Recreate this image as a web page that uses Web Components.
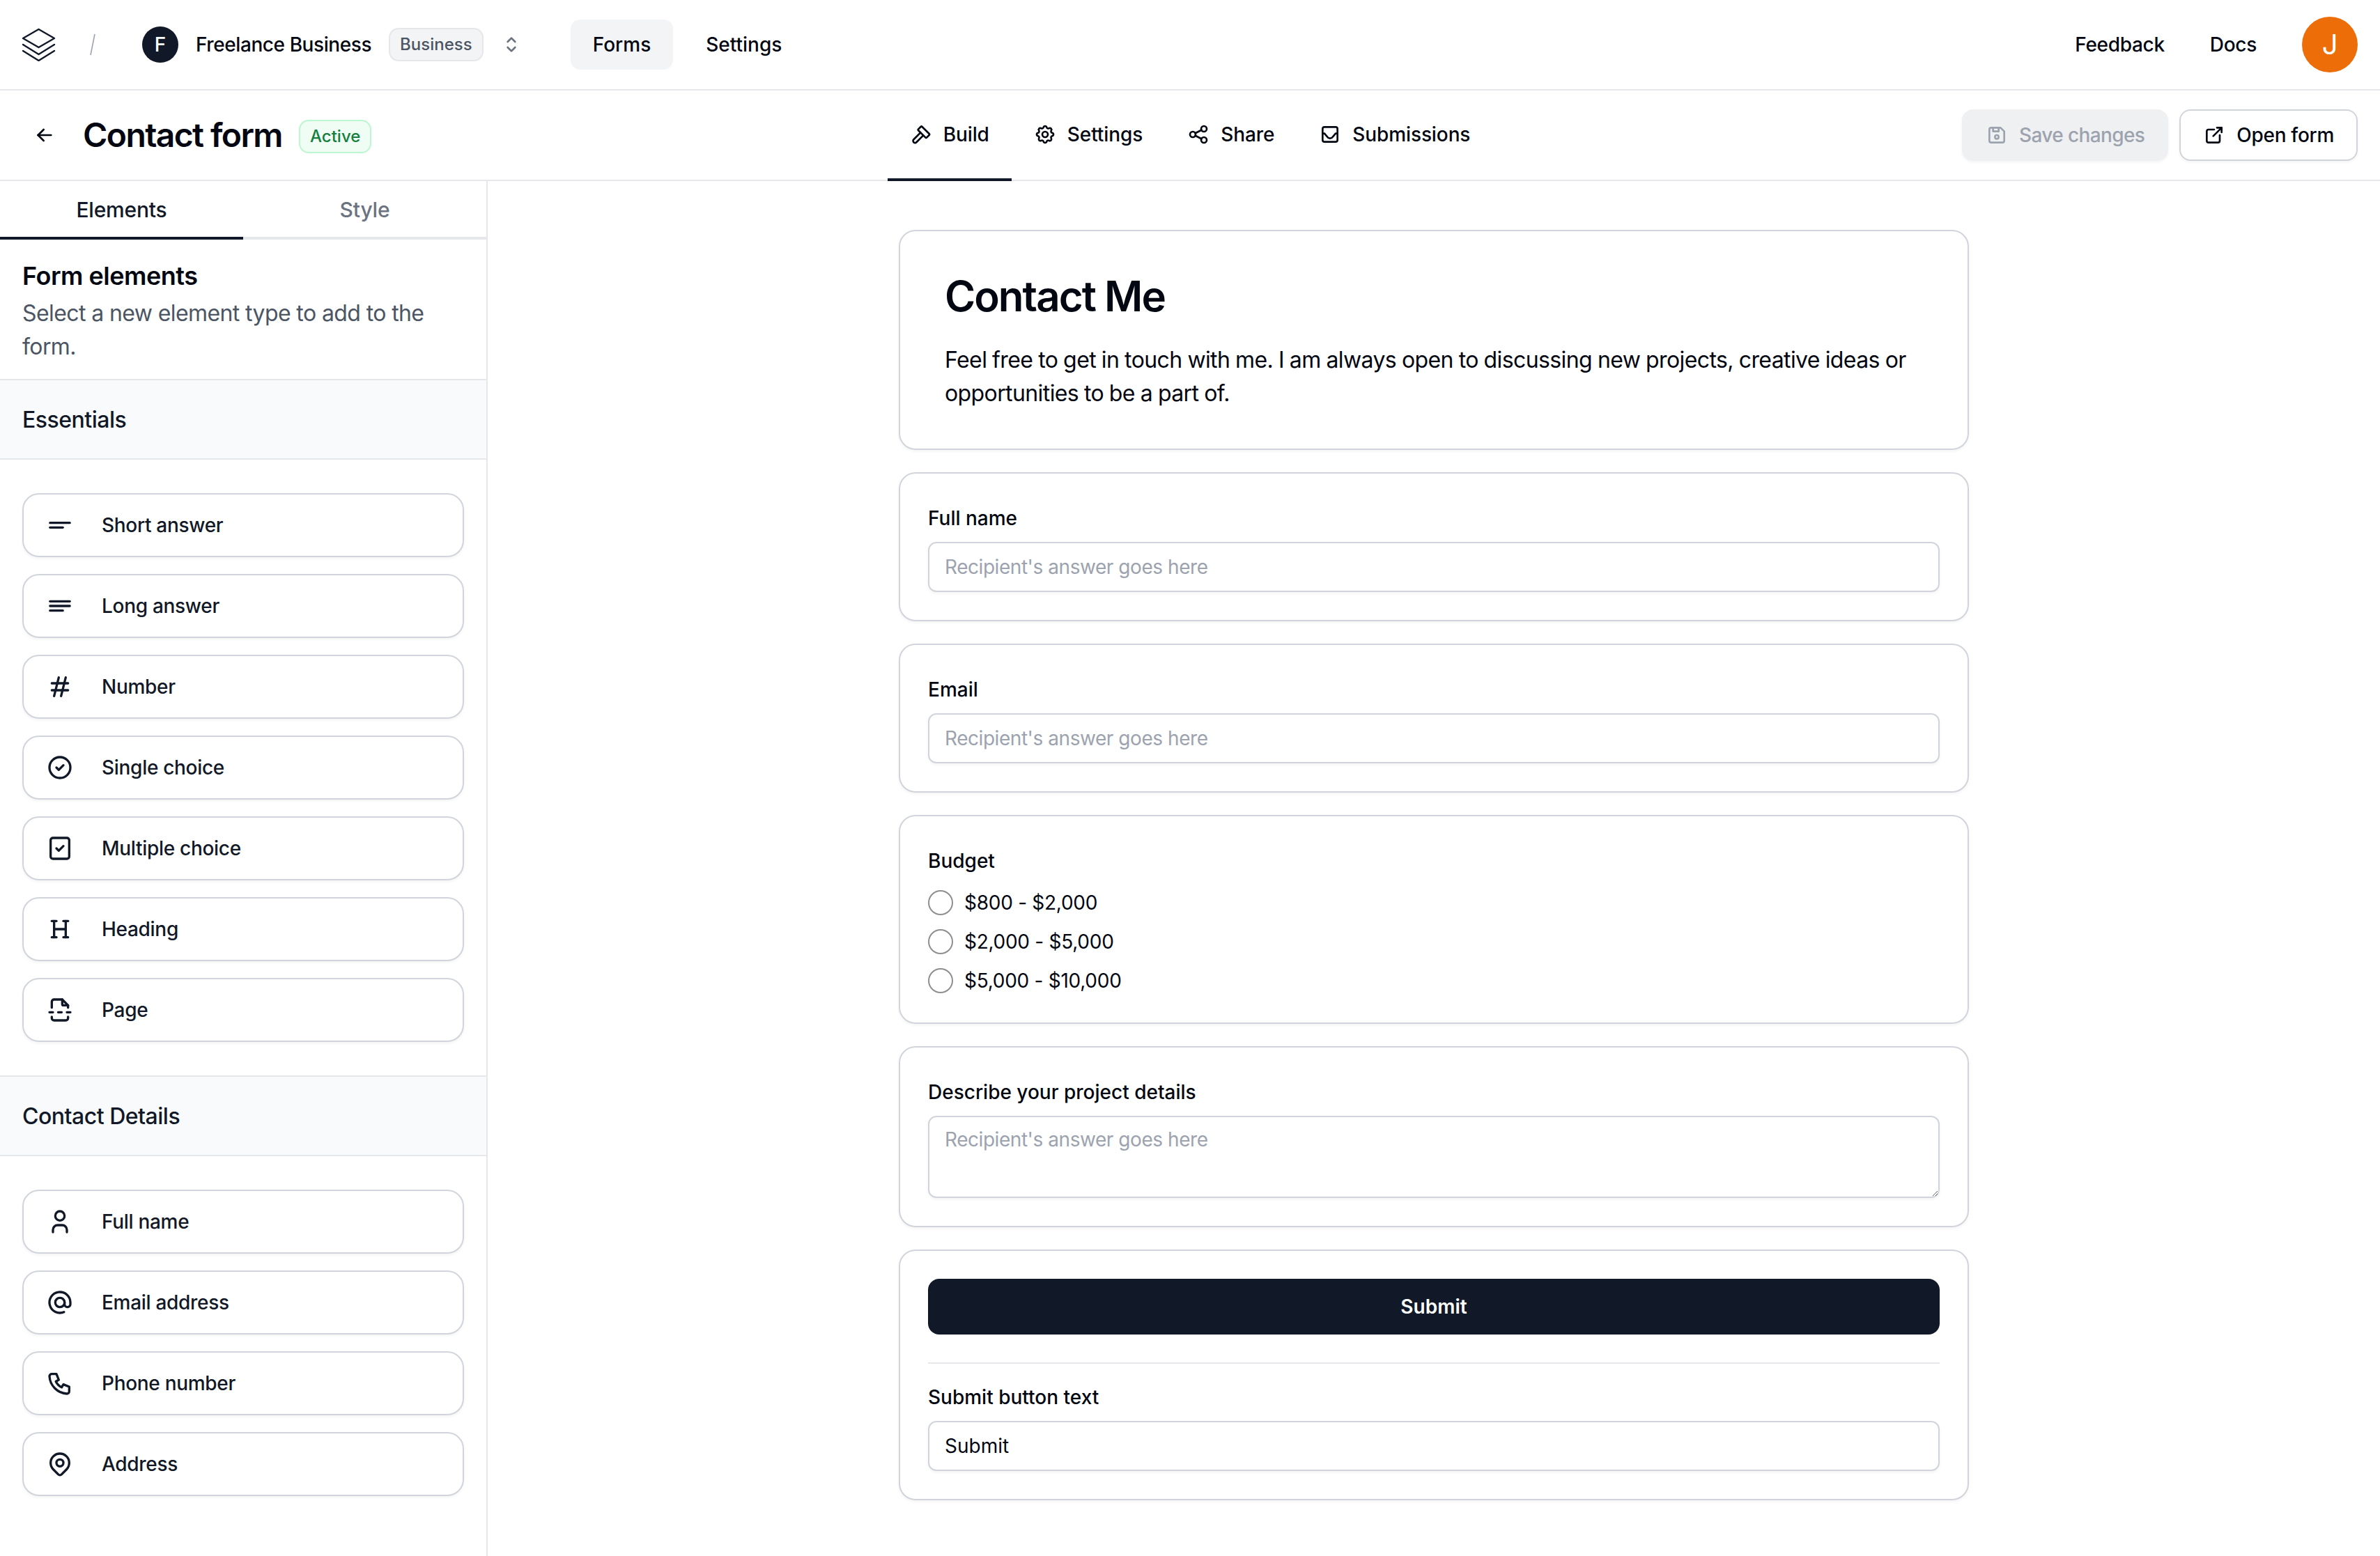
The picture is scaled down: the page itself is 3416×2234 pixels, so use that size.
<!DOCTYPE html>
<html lang="en">
<head>
<meta charset="utf-8">
<title>Contact form</title>
<style>
  html, body { margin: 0; height: 100%; background: #fff; }
  body { font-family: Inter, "Noto Sans", sans-serif; color: #111827; overflow: hidden; }
</style>
</head>
<body>
<form-app></form-app>

<script>
const ICONS = {
  left: '<path d="M5 12h14"/><path d="M5 12l6 6"/><path d="M5 12l6-6"/>',
  selector: '<path d="M8 9l4-4l4 4"/><path d="M16 15l-4 4l-4-4"/>',
  hammer: '<path d="M11.414 10l-7.383 7.418a2.091 2.091 0 0 0 0 2.967a2.11 2.11 0 0 0 2.976 0l7.407-7.385"/><path d="M18.121 15.293l2.586-2.586a1 1 0 0 0 0-1.414l-7.586-7.586a1 1 0 0 0-1.414 0l-2.586 2.586a1 1 0 0 0 0 1.414l7.586 7.586a1 1 0 0 0 1.414 0z"/>',
  settings: '<path d="M10.325 4.317c.426-1.756 2.924-1.756 3.35 0a1.724 1.724 0 0 0 2.573 1.066c1.543-.94 3.31.826 2.37 2.37a1.724 1.724 0 0 0 1.065 2.572c1.756.426 1.756 2.924 0 3.35a1.724 1.724 0 0 0-1.066 2.573c.94 1.543-.826 3.31-2.37 2.37a1.724 1.724 0 0 0-2.572 1.065c-.426 1.756-2.924 1.756-3.35 0a1.724 1.724 0 0 0-2.573-1.066c-1.543.94-3.31-.826-2.37-2.37a1.724 1.724 0 0 0-1.065-2.572c-1.756-.426-1.756-2.924 0-3.35a1.724 1.724 0 0 0 1.066-2.573c-.94-1.543.826-3.31 2.37-2.37c1 .608 2.296.07 2.572-1.065z"/><circle cx="12" cy="12" r="3"/>',
  share: '<circle cx="6" cy="12" r="3"/><circle cx="18" cy="6" r="3"/><circle cx="18" cy="18" r="3"/><path d="M8.7 10.7l6.6-3.4"/><path d="M8.7 13.3l6.6 3.4"/>',
  inbox: '<rect x="4" y="4" width="16" height="16" rx="2"/><path d="M4 11l2 0l3 3.5a3.5 3.5 0 0 0 6 0l3-3.5l2 0"/>',
  save: '<path d="M6 4h10l4 4v10a2 2 0 0 1-2 2h-12a2 2 0 0 1-2-2v-12a2 2 0 0 1 2-2"/><circle cx="12" cy="14" r="2"/><path d="M14 4v4h-6v-4"/>',
  external: '<path d="M12 6h-6a2 2 0 0 0-2 2v10a2 2 0 0 0 2 2h10a2 2 0 0 0 2-2v-6"/><path d="M11 13l9-9"/><path d="M15 4h5v5"/>',
  short: '<path d="M3.5 10h17"/><path d="M3.5 14h11"/>',
  long: '<path d="M3.5 8h17"/><path d="M3.5 12h17"/><path d="M3.5 16h11"/>',
  hash: '<path d="M5 9h14"/><path d="M5 15h14"/><path d="M11 4l-4 16"/><path d="M17 4l-4 16"/>',
  radio: '<circle cx="12" cy="12" r="9"/><path d="M9 12l2 2l4-4"/>',
  check: '<rect x="4" y="3" width="16" height="18" rx="2"/><path d="M9 12l2 2l4-4"/>',
  heading: '<path d="M7 12h10"/><path d="M7 5v14"/><path d="M17 5v14"/><path d="M15 19h4"/><path d="M15 5h4"/><path d="M5 19h4"/><path d="M5 5h4"/>',
  page: '<path d="M14 3v4a1 1 0 0 0 1 1h4"/><path d="M19 18v1a2 2 0 0 1-2 2h-10a2 2 0 0 1-2-2v-1"/><path d="M3 14h3m4.5 0h3m4.5 0h3"/><path d="M5 10v-5a2 2 0 0 1 2-2h7l5 5v2"/>',
  user: '<path d="M8 7a4 4 0 1 0 8 0a4 4 0 0 0-8 0"/><path d="M6 21v-2a4 4 0 0 1 4-4h4a4 4 0 0 1 4 4v2"/>',
  at: '<circle cx="12" cy="12" r="4"/><path d="M16 12v1.5a2.5 2.5 0 0 0 5 0v-1.5a9 9 0 1 0-5.5 8.28"/>',
  phone: '<path d="M5 4h4l2 5l-2.5 1.5a11 11 0 0 0 5 5l1.5-2.5l5 2v4a2 2 0 0 1-2 2a16 16 0 0 1-15-15a2 2 0 0 1 2-2"/>',
  pin: '<path d="M9 11a3 3 0 1 0 6 0a3 3 0 0 0-6 0"/><path d="M17.657 16.657l-4.243 4.243a2 2 0 0 1-2.827 0l-4.244-4.243a8 8 0 1 1 11.314 0z"/>'
};

class AppIcon extends HTMLElement {
  connectedCallback() {
    const size = this.getAttribute('size') || 32;
    this.attachShadow({ mode: 'open' }).innerHTML = `
      <style>
        :host { display: inline-flex; flex: none; width: ${size}px; height: ${size}px; }
        svg { width: 100%; height: 100%; fill: none; stroke: currentColor; stroke-width: 2; stroke-linecap: round; stroke-linejoin: round; }
      </style>
      <svg viewBox="0 0 24 24">${ICONS[this.getAttribute('name')]}</svg>`;
  }
}

class TopBar extends HTMLElement {
  constructor() {
    super();
    this.attachShadow({ mode: 'open' }).innerHTML = `
      <style>
        :host { display: flex; align-items: center; height: 128px; padding: 0 32px; border-bottom: 2px solid #e5e7eb; font-size: 28px; font-weight: 500; line-height: 40px; color: #030712; }
        .logo { width: 48px; height: 48px; fill: none; stroke: #111827; stroke-width: 2.4; stroke-linejoin: round; stroke-linecap: round; }
        .slash { width: 10px; height: 32px; margin: 0 66px 0 48px; stroke: #9ca3af; stroke-width: 1.6; }
        .org { width: 52px; height: 52px; border-radius: 50%; background: #111827; color: #fff; display: flex; align-items: center; justify-content: center; margin-right: 25px; }
        .name { letter-spacing: -0.42px; }
        .plan { margin-left: 25px; height: 44px; padding: 0 14px; display: flex; align-items: center; background: #f3f4f6; border: 2px solid #e5e7eb; border-radius: 14px; font-size: 24px; color: #4b5563; }
        app-icon { color: #6b7280; margin: 0 69px 0 24px; }
        a { padding: 0 32px; height: 72px; display: flex; align-items: center; border-radius: 14px; }
        a.on { background: #f3f4f6; margin-right: 15px; }
        .side { margin-left: auto; display: flex; align-items: center; letter-spacing: -0.3px; }
        .side span { margin-right: 65px; }
        .me { width: 80px; height: 80px; border-radius: 50%; background: #ed6e08; color: #fff; display: flex; align-items: center; justify-content: center; font-size: 40px; font-weight: 400; }
      </style>
      <svg class="logo" viewBox="0 0 48 48"><path d="M23.5 2L46 15L23.5 28L1 15z"/><path d="M1 24L23.5 38L46 24"/><path d="M1 33L23.5 47L46 33"/></svg>
      <svg class="slash" viewBox="0 0 10 32"><path d="M8 1L2 31"/></svg>
      <div class="org">F</div>
      <div class="name">Freelance Business</div>
      <div class="plan">Business</div>
      <app-icon name="selector" size="32"></app-icon>
      <a class="on">Forms</a><a>Settings</a>
      <div class="side"><span>Feedback</span><span>Docs</span><div class="me">J</div></div>`;
  }
}

class SubBar extends HTMLElement {
  constructor() {
    super();
    this.attachShadow({ mode: 'open' }).innerHTML = `
      <style>
        :host { display: flex; align-items: center; height: 128px; padding: 0 32px; border-bottom: 2px solid #e5e7eb; font-size: 28px; font-weight: 500; line-height: 40px; color: #030712; }
        .left, .right { flex: 1 1 0; display: flex; align-items: center; }
        .right { justify-content: flex-end; gap: 16px; letter-spacing: -0.3px; }
        .left app-icon { margin: 0 39px 0 16px; }
        h1 { margin: 0; font-size: 48px; line-height: 64px; font-weight: 600; letter-spacing: -1.6px; }
        .active { margin: 3px 0 0 24px; height: 44px; padding: 0 14px; display: flex; align-items: center; background: #f0fdf4; border: 2px solid #bbf7d0; border-radius: 14px; font-size: 24px; color: #15803d; }
        nav { display: flex; align-self: stretch; letter-spacing: -0.1px; }
        nav a { display: flex; align-items: center; gap: 16px; padding: 0 32px; height: 130px; box-sizing: border-box; border-bottom: 4px solid transparent; }
        nav a.on { border-bottom-color: #111827; }
        button { font: inherit; letter-spacing: inherit; display: flex; align-items: center; gap: 16px; height: 74px; padding: 0 32px; border-radius: 16px; box-shadow: 0 2px 4px rgba(0,0,0,.05); }
        .save { background: #eff0f2; border: 2px solid #eff0f2; color: #9ca3af; letter-spacing: -0.6px; }
        .open { background: #fff; border: 2px solid #d1d5db; color: #030712; }
      </style>
      <div class="left">
        <app-icon name="left" size="32"></app-icon>
        <h1>Contact form</h1>
        <div class="active">Active</div>
      </div>
      <nav>
        <a class="on"><app-icon name="hammer"></app-icon>Build</a>
        <a><app-icon name="settings"></app-icon>Settings</a>
        <a><app-icon name="share"></app-icon>Share</a>
        <a><app-icon name="inbox"></app-icon>Submissions</a>
      </nav>
      <div class="right">
        <button class="save"><app-icon name="save"></app-icon>Save changes</button>
        <button class="open"><app-icon name="external"></app-icon>Open form</button>
      </div>`;
  }
}

class PaletteItem extends HTMLElement {
  constructor() {
    super();
    this.attachShadow({ mode: 'open' }).innerHTML = `
      <style>
        :host { display: flex; align-items: center; gap: 40px; height: 92px; box-sizing: border-box; padding: 0 32px; border: 2px solid #d1d5db; border-radius: 24px; background: #fff; box-shadow: 0 2px 4px rgba(0,0,0,.05); font-size: 28px; font-weight: 500; letter-spacing: -0.3px; color: #111827; }
      </style>
      <app-icon name="${this.getAttribute('icon')}" size="40"></app-icon><slot></slot>`;
  }
}

class PaletteGroup extends HTMLElement {
  constructor() {
    super();
    this.attachShadow({ mode: 'open' }).innerHTML = `
      <style>
        :host { display: block; }
        h3 { margin: 0; height: 112px; box-sizing: content-box; display: flex; align-items: center; padding: 0 32px; background: #f9fafb; border-top: 2px solid #e5e7eb; border-bottom: 2px solid #e5e7eb; font-size: 32px; font-weight: 500; letter-spacing: -0.5px; color: #111827; }
        .list { display: flex; flex-direction: column; gap: 24px; padding: 48px 32px; }
      </style>
      <h3>${this.getAttribute('title')}</h3>
      <div class="list"><slot></slot></div>`;
  }
}

class FormSidebar extends HTMLElement {
  constructor() {
    super();
    this.attachShadow({ mode: 'open' }).innerHTML = `
      <style>
        :host { display: block; width: 698px; border-right: 2px solid #e5e7eb; overflow: hidden; }
        .tabs { display: flex; height: 84px; font-size: 30px; font-weight: 500; letter-spacing: -0.2px; }
        .tabs div { flex: 1; display: flex; align-items: center; justify-content: center; box-sizing: border-box; padding-top: 2px; border-bottom: 4px solid #e5e7eb; color: #6b7280; }
        .tabs div.on { border-bottom-color: #111827; color: #111827; }
        .intro { padding: 24px 32px 22px; }
        h2 { margin: 0; font-size: 36px; line-height: 56px; font-weight: 600; letter-spacing: -0.5px; color: #030712; }
        p { margin: 2px 0 0; font-size: 32px; line-height: 48px; letter-spacing: -0.6px; color: #4b5563; }
      </style>
      <div class="tabs"><div class="on">Elements</div><div>Style</div></div>
      <div class="intro">
        <h2>Form elements</h2>
        <p>Select a new element type to add to the form.</p>
      </div>
      <slot></slot>`;
  }
}

class FormCard extends HTMLElement {
  constructor() {
    super();
    this.attachShadow({ mode: 'open' }).innerHTML = `
      <style>
        :host { display: block; box-sizing: border-box; padding: 40px; border: 2px solid #d1d5db; border-radius: 24px; background: #fff; box-shadow: 0 2px 4px rgba(0,0,0,.05); }
        :host([intro]) { padding: 57px 64px 55px; }
      </style>
      <slot></slot>`;
  }
}

class FormField extends HTMLElement {
  constructor() {
    super();
    this.attachShadow({ mode: 'open' }).innerHTML = `
      <style>
        :host { display: block; font-size: 28px; line-height: 40px; color: #030712; }
        label { display: block; padding-top: 4px; font-weight: 500; margin-bottom: 14px; }
        .box { box-sizing: border-box; height: 72px; padding: 14px 22px; border: 2px solid #d1d5db; border-radius: 12px; background: #fff; box-shadow: 0 2px 4px rgba(0,0,0,.05); color: #9ca3af; letter-spacing: -0.45px; }
        .box.area { height: 118px; padding-top: 12px; resize: vertical; overflow: auto; }
        :host([value]) .box { color: #030712; letter-spacing: 0; }
      </style>
      <label>${this.getAttribute('label')}</label>
      <div class="box ${this.hasAttribute('area') ? 'area' : ''}">${this.getAttribute('value') || "Recipient's answer goes here"}</div>`;
  }
}

class RadioGroup extends HTMLElement {
  constructor() {
    super();
    const rows = this.getAttribute('options').split('|').map(o => `<div class="row"><i></i>${o}</div>`).join('');
    this.attachShadow({ mode: 'open' }).innerHTML = `
      <style>
        :host { display: block; padding-bottom: 2px; font-size: 28px; line-height: 40px; color: #030712; }
        label { display: block; padding-top: 4px; font-weight: 500; margin-bottom: 22px; }
        .row { display: flex; align-items: center; gap: 16px; height: 36px; letter-spacing: -0.27px; }
        .row + .row { margin-top: 20px; }
        i { width: 36px; height: 36px; box-sizing: border-box; border: 2px solid #8f8f8f; border-radius: 50%; background: #fff; }
      </style>
      <label>${this.getAttribute('label')}</label>${rows}`;
  }
}

class FormApp extends HTMLElement {
  constructor() {
    super();
    this.attachShadow({ mode: 'open' }).innerHTML = `
      <style>
        :host { display: flex; flex-direction: column; height: 2234px; }
        .body { flex: 1; display: flex; min-height: 0; }
        main { flex: 1; display: flex; flex-direction: column; align-items: center; padding-top: 70px; }
        .stack { width: 1536px; display: flex; flex-direction: column; gap: 32px; }
        h2 { margin: 0 0 32px; font-size: 60px; line-height: 72px; font-weight: 600; letter-spacing: -1.95px; color: #030712; }
        p { margin: 0; font-size: 32px; line-height: 48px; letter-spacing: -0.6px; word-spacing: -0.6px; color: #030712; }
        .submit { height: 80px; display: flex; align-items: center; justify-content: center; border-radius: 16px; background: #111827; color: #fff; font-size: 28px; font-weight: 600; }
        hr { border: 0; border-top: 2px solid #e5e7eb; margin: 40px 0 24px; }
      </style>
      <top-bar></top-bar>
      <sub-bar></sub-bar>
      <div class="body">
        <form-sidebar>
          <palette-group title="Essentials">
            <palette-item icon="short">Short answer</palette-item>
            <palette-item icon="long">Long answer</palette-item>
            <palette-item icon="hash">Number</palette-item>
            <palette-item icon="radio">Single choice</palette-item>
            <palette-item icon="check">Multiple choice</palette-item>
            <palette-item icon="heading">Heading</palette-item>
            <palette-item icon="page">Page</palette-item>
          </palette-group>
          <palette-group title="Contact Details">
            <palette-item icon="user">Full name</palette-item>
            <palette-item icon="at">Email address</palette-item>
            <palette-item icon="phone">Phone number</palette-item>
            <palette-item icon="pin">Address</palette-item>
          </palette-group>
        </form-sidebar>
        <main>
          <div class="stack">
            <form-card intro>
              <h2>Contact Me</h2>
              <p>Feel free to get in touch with me. I am always open to discussing new projects, creative ideas or opportunities to be a part of.</p>
            </form-card>
            <form-card><form-field label="Full name"></form-field></form-card>
            <form-card><form-field label="Email"></form-field></form-card>
            <form-card><radio-group label="Budget" options="$800 - $2,000|$2,000 - $5,000|$5,000 - $10,000"></radio-group></form-card>
            <form-card><form-field area label="Describe your project details"></form-field></form-card>
            <form-card>
              <div class="submit">Submit</div>
              <hr>
              <form-field label="Submit button text" value="Submit"></form-field>
            </form-card>
          </div>
        </main>
      </div>`;
  }
}

customElements.define('app-icon', AppIcon);
customElements.define('top-bar', TopBar);
customElements.define('sub-bar', SubBar);
customElements.define('palette-item', PaletteItem);
customElements.define('palette-group', PaletteGroup);
customElements.define('form-sidebar', FormSidebar);
customElements.define('form-card', FormCard);
customElements.define('form-field', FormField);
customElements.define('radio-group', RadioGroup);
customElements.define('form-app', FormApp);
</script>
</body>
</html>
